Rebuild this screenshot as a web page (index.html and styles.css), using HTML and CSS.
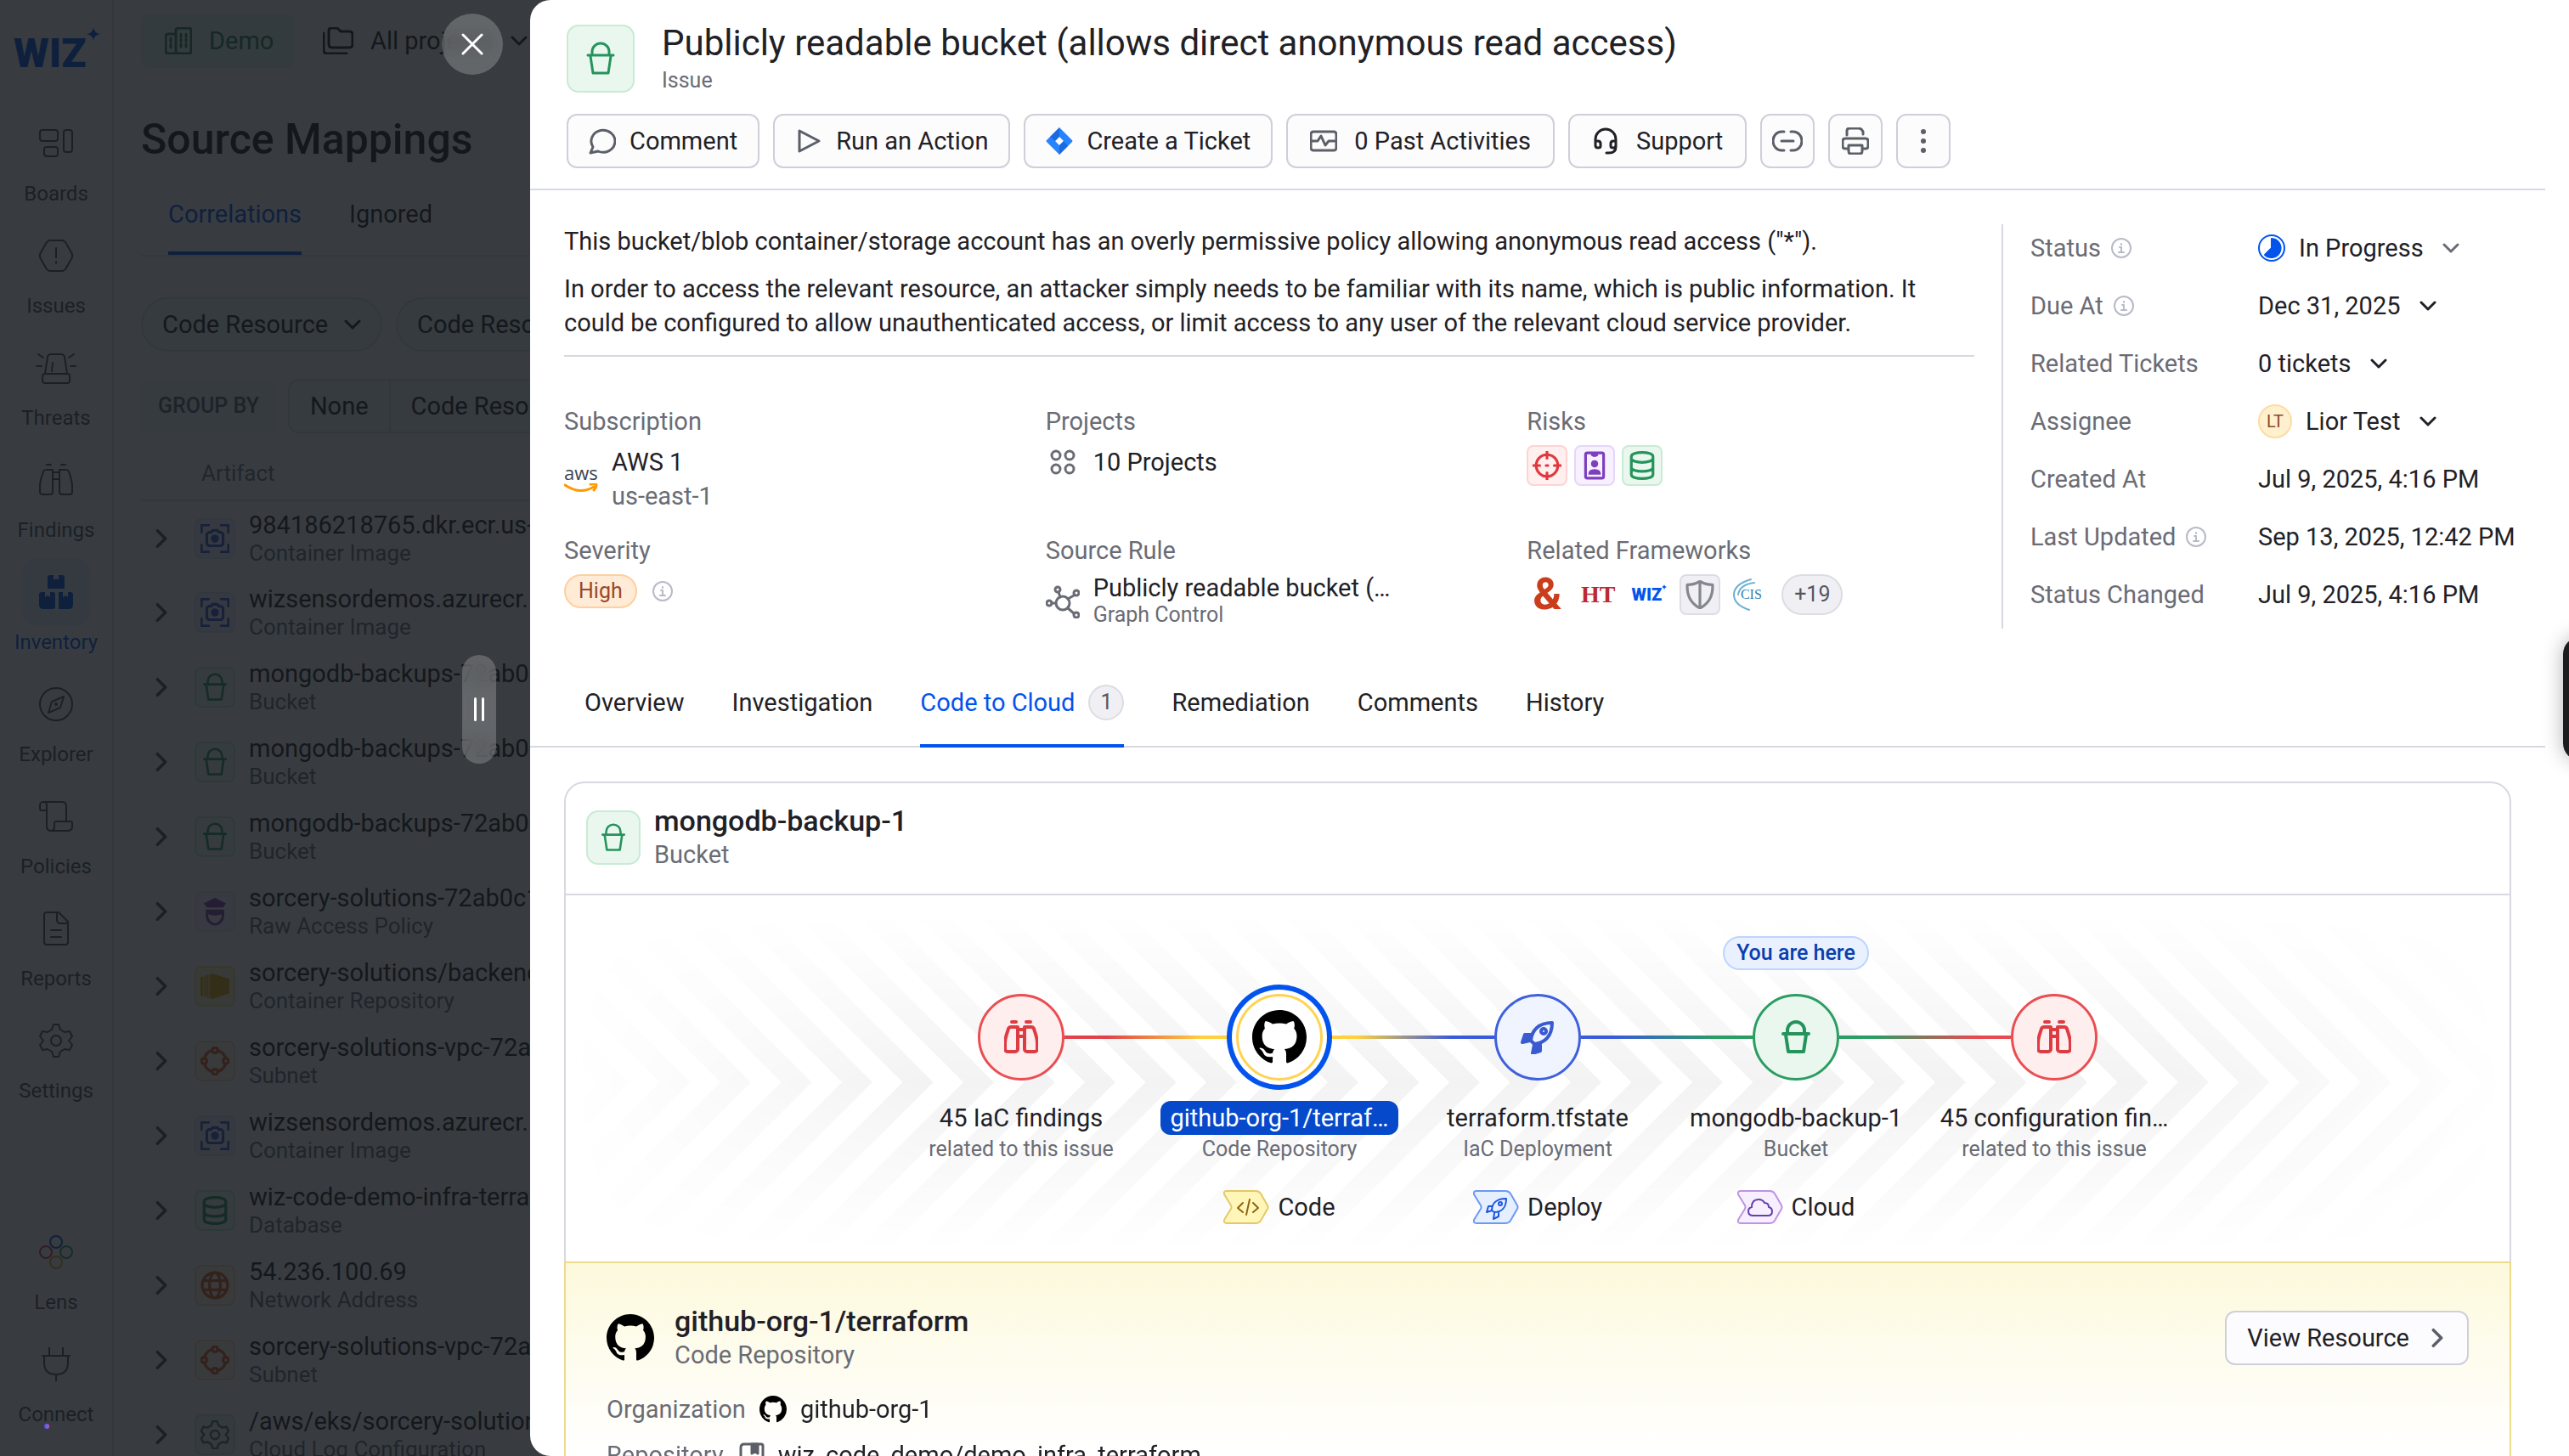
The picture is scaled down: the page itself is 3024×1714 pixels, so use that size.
FILE: index.html
```
<!DOCTYPE html>
<html lang="en">
<head>
  <meta charset="UTF-8">
  <meta name="viewport" content="width=device-width, initial-scale=1.0">
  <title>Wiz - Source Mappings</title>
  <link rel="stylesheet" href="styles.css">
</head>
<body>
  <!-- shared icons -->
  <svg class="sprite" aria-hidden="true">
    <symbol id="i-bucket" viewBox="0 0 32 40"><path d="M6 14v-2a10 10 0 0 1 20 0v2M1 16h30M4 17l3 20h18l3-20"/></symbol>
    <symbol id="i-down" viewBox="0 0 20 12"><path d="M2 2l8 8 8-8"/></symbol>
    <symbol id="i-right" viewBox="0 0 12 20"><path d="M2 2l8 8-8 8"/></symbol>
    <symbol id="i-info" viewBox="0 0 24 24"><circle cx="12" cy="12" r="11"/><path d="M10 11h2v6M9 17h6M12 7v1"/></symbol>
    <symbol id="i-binoculars" viewBox="0 0 40 40"><path d="M9 2h5M26 2h5M8 8h8v26a3 3 0 0 1-3 3H4a3 3 0 0 1-3-3V27c0-7 3-13 4-17q1-2 3-2zM32 8h-8v26a3 3 0 0 0 3 3h9a3 3 0 0 0 3-3V27c0-7-3-13-4-17q-1-2-3-2zM16 11h8M16 19h8"/></symbol>
    <symbol id="i-image" viewBox="0 0 32 32"><path d="M1 9V1h8M23 1h8v8M31 23v8h-8M9 31H1v-8M9 9h3l1-2h6l1 2h3l2 2v11l-2 2H9l-2-2V11z"/><circle cx="16" cy="16" r="3" fill="currentColor"/></symbol>
    <symbol id="i-db" viewBox="0 0 28 32"><path d="M2 6c0-6 24-6 24 0v20c0 6-24 6-24 0zM2 8c0 6 24 6 24 0M2 18c0 6 24 6 24 0"/></symbol>
    <symbol id="i-subnet" viewBox="0 0 32 32"><circle cx="16" cy="16" r="12"/><g fill="#fdeedd"><circle cx="16" cy="4" r="3"/><circle cx="16" cy="28" r="3"/><circle cx="4" cy="16" r="3"/><circle cx="28" cy="16" r="3"/></g></symbol>
    <symbol id="i-globe" viewBox="0 0 32 32"><circle cx="16" cy="16" r="14"/><ellipse cx="16" cy="16" rx="6" ry="14"/><path d="M3 11h26M3 21h26"/></symbol>
    <symbol id="i-gear" viewBox="0 0 40 40"><circle cx="20" cy="20" r="6"/><path d="M17 1h6l2 6 5 3 6-1 3 6-4 5 4 5-3 6-6-1-5 3-2 6h-6l-2-6-5-3-6 1-3-6 4-5-4-5 3-6 6 1 5-3z"/></symbol>
    <symbol id="i-rocket" viewBox="0 0 40 40"><path d="M12 24c1-12 9-21 25-21 0 16-9 24-21 25z"/><circle cx="27" cy="13" r="3"/><path class="fin" d="M12 17H5l-3 9 9-2M23 29v7l-9 3 2-10"/></symbol>
    <symbol id="i-github" viewBox="0 0 16 16"><path d="M8 0C3.58 0 0 3.58 0 8c0 3.54 2.29 6.53 5.47 7.59.4.07.55-.17.55-.38 0-.19-.01-.82-.01-1.49-2.01.37-2.53-.49-2.69-.94-.09-.23-.48-.94-.82-1.13-.28-.15-.68-.52-.01-.53.63-.01 1.08.58 1.23.82.72 1.21 1.87.87 2.33.66.07-.52.28-.87.51-1.07-1.78-.2-3.64-.89-3.64-3.95 0-.87.31-1.59.82-2.15-.08-.2-.36-1.02.08-2.12 0 0 .67-.21 2.2.82.64-.18 1.32-.27 2-.27s1.36.09 2 .27c1.53-1.04 2.2-.82 2.2-.82.44 1.1.16 1.92.08 2.12.51.56.82 1.27.82 2.15 0 3.07-1.87 3.75-3.65 3.95.29.25.54.73.54 1.48 0 1.07-.01 1.93-.01 2.2 0 .21.15.46.55.38A8.01 8.01 0 0 0 16 8c0-4.42-3.58-8-8-8z"/></symbol>
    <symbol id="i-star" viewBox="0 0 16 16"><path d="M8 0q1 7 8 8-7 1-8 8-1-7-8-8 7-1 8-8z"/></symbol>
  </svg>

  <div class="app">
    <aside class="sidebar">
      <a href="#" class="logo">WIZ<svg class="solid"><use href="#i-star"/></svg></a>
      <nav>
        <a href="#"><span class="nav-icon"><svg viewBox="0 0 40 40"><rect x="1" y="4" width="21" height="13" rx="3"/><rect x="6" y="24" width="16" height="11" rx="3"/><rect x="29" y="4" width="10" height="26" rx="3"/></svg></span>Boards</a>
        <a href="#"><span class="nav-icon"><svg viewBox="0 0 40 40"><path d="M12 2h16l3 2 8 14v4l-8 14-3 2H12l-3-2L1 22v-4L9 4zM20 11v11M20 27v2"/></svg></span>Issues</a>
        <a href="#"><span class="nav-icon"><svg class="wide" viewBox="0 0 48 40"><rect x="8" y="27" width="32" height="11" rx="3"/><path d="M11 27l3-20q1-3 4-3h12q3 0 4 3l3 20M20 14l-1 10M1 18h6M41 18h6M3 4l6 4M45 4l-6 4"/></svg></span>Threats</a>
        <a href="#"><span class="nav-icon"><svg><use href="#i-binoculars"/></svg></span>Findings</a>
        <a href="#" class="active"><span class="nav-icon"><svg class="solid" viewBox="0 0 40 40"><path d="M10 3q0-3 3-3h4v6l3-2 3 2V0h4q3 0 3 3v13H10zM0 23q0-3 3-3h4v6l3-2 3 2v-6h3q3 0 3 3v14q0 3-3 3H5q-5 0-5-5zM23 20h5v6l3-2 3 2v-6h3q3 0 3 3v12q0 5-5 5H23z"/></svg></span>Inventory</a>
        <a href="#"><span class="nav-icon"><svg viewBox="0 0 40 40"><circle cx="20" cy="20" r="19"/><path d="M29 11l-4 13-14 6 4-13z"/><circle cx="20" cy="20" r="1"/></svg></span>Explorer</a>
        <a href="#"><span class="nav-icon"><svg viewBox="0 0 40 40"><path d="M5 3h22q5 0 5 5v18M1 7a4 4 0 0 1 8 0v6H3q-2 0-2-2zM9 13v19q0 5 5 5h19q6 0 6-5v-4q0-2-2-2H20q-2 0-2 2v4q0 5-4 5"/></svg></span>Policies</a>
        <a href="#"><span class="nav-icon"><svg viewBox="0 0 40 40"><path d="M9 1h14l11 11v24q0 3-3 3H9q-3 0-3-3V4q0-3 3-3zM21 1v9q0 4 4 4h9M14 22h12M14 30h12"/></svg></span>Reports</a>
        <a href="#"><span class="nav-icon"><svg><use href="#i-gear"/></svg></span>Settings</a>
      </nav>
      <nav class="bottom">
        <a href="#"><span class="nav-icon"><svg viewBox="0 0 40 40"><circle cx="20" cy="8" r="7" stroke="#0254ec"/><circle cx="8" cy="20" r="7" stroke="#d8394a"/><circle cx="32" cy="20" r="7" stroke="#2b9d66"/><circle cx="20" cy="32" r="7" stroke="#d9a51f"/></svg></span>Lens</a>
        <a href="#"><span class="nav-icon"><svg viewBox="0 0 40 40"><path d="M4 10h32M6 10v8q0 14 14 14t14-14v-8M12 10V0M28 10V0M20 32v8"/></svg></span>Connect</a>
      </nav>
    </aside>

    <div class="page">
      <div class="topbar">
        <a href="#" class="tenant"><svg viewBox="0 0 32 32"><path d="M13 31H4q-3 0-3-3V11q0-3 3-3h9M13 31V4q0-3 3-3h12q3 0 3 3v24q0 3-3 3zM7 13v4M7 20v4M19 8v3M25 8v3M19 14v3M25 14v3M19 20v3M25 20v3"/></svg>Demo</a>
        <a href="#" class="projects"><svg class="wide" viewBox="0 0 36 32"><path d="M1 7v20q0 4 4 4h23M10 1h7l4 4h10q4 0 4 4v11q0 4-4 4H11q-4 0-4-4V4q0-3 3-3z"/></svg>All projects<svg class="chev"><use href="#i-down"/></svg></a>
      </div>
      <h1>Source Mappings</h1>
      <div class="page-tabs"><a href="#" class="active">Correlations</a><a href="#">Ignored</a></div>
      <div class="filters">
        <div class="filter"><select aria-label="Code Resource"><option>Code Resource</option></select><svg class="chev"><use href="#i-down"/></svg></div>
        <div class="filter"><select aria-label="Code Resource Type"><option>Code Resource Type</option></select><svg class="chev"><use href="#i-down"/></svg></div>
      </div>
      <div class="group">
        <span class="group-label">GROUP BY</span>
        <div class="segments"><button type="button">None</button><button type="button">Code Resource</button></div>
      </div>
      <table class="artifacts">
        <thead><tr><th></th><th></th><th>Artifact</th></tr></thead>
        <tbody>
          <tr><td><svg class="arrow"><use href="#i-right"/></svg></td><td><span class="box blue"><svg><use href="#i-image"/></svg></span></td><td>984186218765.dkr.ecr.us-east-1<small>Container Image</small></td></tr>
          <tr><td><svg class="arrow"><use href="#i-right"/></svg></td><td><span class="box blue"><svg><use href="#i-image"/></svg></span></td><td>wizsensordemos.azurecr.io<small>Container Image</small></td></tr>
          <tr><td><svg class="arrow"><use href="#i-right"/></svg></td><td><span class="box green"><svg><use href="#i-bucket"/></svg></span></td><td>mongodb-backups-72ab0c<small>Bucket</small></td></tr>
          <tr><td><svg class="arrow"><use href="#i-right"/></svg></td><td><span class="box green"><svg><use href="#i-bucket"/></svg></span></td><td>mongodb-backups-72ab0c<small>Bucket</small></td></tr>
          <tr><td><svg class="arrow"><use href="#i-right"/></svg></td><td><span class="box green"><svg><use href="#i-bucket"/></svg></span></td><td>mongodb-backups-72ab0c<small>Bucket</small></td></tr>
          <tr><td><svg class="arrow"><use href="#i-right"/></svg></td><td><span class="box purple"><svg viewBox="0 0 32 36"><path fill="currentColor" stroke="none" d="M2 8L16 1l14 7-4 5H6z"/><path d="M6 17h20v6c0 7-6 11-10 11S6 30 6 23z"/><path fill="currentColor" stroke="none" d="M6 16h20v5q-10 4-20 0z"/></svg></span></td><td>sorcery-solutions-72ab0c1d<small>Raw Access Policy</small></td></tr>
          <tr><td><svg class="arrow"><use href="#i-right"/></svg></td><td><span class="box yellow"><svg class="solid" viewBox="0 0 32 32"><path d="M0 6l3-1v22l-3-1zM4 5l2-1v24l-2-1zM7 4l2-1v26l-2-1zM10 3l4-1 18 6v16l-18 6-4-1z"/></svg></span></td><td>sorcery-solutions/backend<small>Container Repository</small></td></tr>
          <tr><td><svg class="arrow"><use href="#i-right"/></svg></td><td><span class="box orange"><svg><use href="#i-subnet"/></svg></span></td><td>sorcery-solutions-vpc-72ab<small>Subnet</small></td></tr>
          <tr><td><svg class="arrow"><use href="#i-right"/></svg></td><td><span class="box blue"><svg><use href="#i-image"/></svg></span></td><td>wizsensordemos.azurecr.io<small>Container Image</small></td></tr>
          <tr><td><svg class="arrow"><use href="#i-right"/></svg></td><td><span class="box green"><svg><use href="#i-db"/></svg></span></td><td>wiz-code-demo-infra-terraform<small>Database</small></td></tr>
          <tr><td><svg class="arrow"><use href="#i-right"/></svg></td><td><span class="box orange"><svg><use href="#i-globe"/></svg></span></td><td>54.236.100.69<small>Network Address</small></td></tr>
          <tr><td><svg class="arrow"><use href="#i-right"/></svg></td><td><span class="box orange"><svg><use href="#i-subnet"/></svg></span></td><td>sorcery-solutions-vpc-72ab<small>Subnet</small></td></tr>
          <tr><td><svg class="arrow"><use href="#i-right"/></svg></td><td><span class="box teal"><svg><use href="#i-gear"/></svg></span></td><td>/aws/eks/sorcery-solutions<small>Cloud Log Configuration</small></td></tr>
        </tbody>
      </table>
    </div>
  </div>

  <div class="backdrop"><span class="pulse"></span></div>

  <div class="drawer-wrap">
    <button type="button" class="close" aria-label="Close"><svg viewBox="0 0 26 26"><path d="M2 2l22 22M24 2L2 24"/></svg></button>
    <button type="button" class="resize" aria-label="Resize"><i></i><i></i></button>

    <main class="drawer">
      <header class="drawer-head">
        <div class="heading">
          <span class="box green large"><svg><use href="#i-bucket"/></svg></span>
          <div>
            <h2>Publicly readable bucket (allows direct anonymous read access)</h2>
            <p>Issue</p>
          </div>
        </div>
        <div class="actions">
          <button type="button"><svg viewBox="0 0 32 32"><path d="M2 30l3-7a14 13 0 1 1 6 5z"/></svg>Comment</button>
          <button type="button"><svg viewBox="0 0 32 32"><path d="M5 4v24l23-12z"/></svg>Run an Action</button>
          <button type="button"><svg class="solid" viewBox="0 0 32 32"><path fill="#2684ff" fill-rule="evenodd" d="M16 0l15 15q1 1 0 2L16 32 1 17q-1-1 0-2zM16 11l-5 5 5 5 5-5z"/><path fill="#1259cf" d="M16 0v11l-5 5-6-5zM16 32V21l5-5 5 6z" opacity=".6"/></svg>Create a Ticket</button>
          <button type="button" class="roomy"><svg viewBox="0 0 32 32"><rect x="1" y="5" width="30" height="22" rx="3"/><path d="M2 16h7l4-6 5 11 4-5h7"/></svg>0 Past Activities</button>
          <button type="button" class="roomy dark"><svg viewBox="0 0 32 32"><path d="M4 18v-4a12 12 0 0 1 24 0v9q0 7-8 7h-3M4 16h3q3 0 3 3v3q0 2-3 2t-3-3zM28 16h-3q-3 0-3 3v3q0 2 3 2t3-3z"/></svg>Support</button>
          <button type="button" class="square" aria-label="Copy link"><svg class="wide" viewBox="0 0 36 32"><path d="M14 5h-3a10 11 0 0 0 0 22h3M22 5h3a10 11 0 0 1 0 22h-3M11 16h14"/></svg></button>
          <button type="button" class="square" aria-label="Print"><svg viewBox="0 0 32 32"><path d="M6 9V4q0-3 3-3h11q3 0 5 4v3M7 25H4q-3 0-3-3v-6q0-3 3-3h24q3 0 3 3v6q0 3-3 3h-3M8 21h16v7q0 3-3 3H11q-3 0-3-3z"/></svg></button>
          <button type="button" class="square" aria-label="More"><svg class="solid" viewBox="0 0 32 32"><circle cx="16" cy="5" r="3"/><circle cx="16" cy="16" r="3"/><circle cx="16" cy="27" r="3"/></svg></button>
        </div>
      </header>

      <section class="summary">
        <div class="about">
          <div class="description">
            <p>This bucket/blob container/storage account has an overly permissive policy allowing anonymous read access ("*").</p>
            <p>In order to access the relevant resource, an attacker simply needs to be familiar with its name, which is public information. It could be configured to allow unauthenticated access, or limit access to any user of the relevant cloud service provider.</p>
          </div>
          <div class="facts">
            <div>
              <h3>Subscription</h3>
              <div class="fact"><span class="aws">aws<svg viewBox="0 0 40 12"><path d="M1 2q18 12 34 2"/><path d="M31 1q7-1 7 1 0 3-3 6"/></svg></span><p>AWS 1<span>us-east-1</span></p></div>
            </div>
            <div>
              <h3>Projects</h3>
              <div class="fact"><svg viewBox="0 0 40 40"><circle cx="12" cy="12" r="5"/><circle cx="28" cy="12" r="5"/><circle cx="12" cy="28" r="5"/><circle cx="28" cy="28" r="5"/></svg><p>10 Projects</p></div>
            </div>
            <div>
              <h3>Risks</h3>
              <div class="risks">
                <span class="box red"><svg viewBox="0 0 32 32"><circle cx="16" cy="16" r="12"/><path d="M16 0v8M16 24v8M0 16h8M24 16h8M15 16h2"/></svg></span>
                <span class="box violet"><svg viewBox="0 0 32 32"><rect x="6" y="2" width="20" height="28" rx="2"/><path fill="currentColor" stroke="none" d="M12 2h8v3q-4 3-8 0zM16 10a4 4 0 1 1 0 8 4 4 0 0 1 0-8zM9 26q0-6 7-6t7 6z"/></svg></span>
                <span class="box green"><svg><use href="#i-db"/></svg></span>
              </div>
            </div>
            <div>
              <h3>Severity</h3>
              <div class="severity"><span class="high">High</span><svg class="info"><use href="#i-info"/></svg></div>
            </div>
            <div>
              <h3>Source Rule</h3>
              <div class="fact rule"><svg viewBox="0 0 40 40"><circle cx="20" cy="22" r="8"/><circle cx="14" cy="6" r="3"/><circle cx="36" cy="10" r="3"/><circle cx="36" cy="36" r="3"/><circle cx="4" cy="22" r="3"/><path d="M15 9l2 6M33 13l-7 4M33 34l-7-6M7 22h5"/></svg><p>Publicly readable bucket (…<span>Graph Control</span></p></div>
            </div>
            <div>
              <h3>Related Frameworks</h3>
              <div class="frameworks">
                <span class="amp">&amp;</span>
                <span class="ht">HT</span>
                <span class="mini-wiz">WIZ<svg class="solid"><use href="#i-star"/></svg></span>
                <span class="box grey"><svg viewBox="0 0 32 32"><path d="M16 1q6 4 14 4 1 18-14 26Q1 23 2 5q8 0 14-4zM16 1v30"/></svg></span>
                <span class="cis"><svg viewBox="0 0 40 40"><path d="M24 2Q4 8 4 20t18 18M28 6Q11 8 9 20"/></svg>CIS</span>
                <a href="#" class="more">+19</a>
              </div>
            </div>
          </div>
        </div>

        <div class="meta">
          <label for="status">Status <svg class="info"><use href="#i-info"/></svg></label>
          <div class="picker"><svg class="progress" viewBox="0 0 32 32"><circle cx="16" cy="16" r="15"/><path d="M16 5a11 11 0 1 1-8 19l8-8z"/></svg><select id="status"><option>In Progress</option></select><svg class="chev light"><use href="#i-down"/></svg></div>
          <label for="due">Due At <svg class="info"><use href="#i-info"/></svg></label>
          <div class="picker"><select id="due"><option>Dec 31, 2025</option></select><svg class="chev"><use href="#i-down"/></svg></div>
          <label for="tickets">Related Tickets</label>
          <div class="picker"><select id="tickets"><option>0 tickets</option></select><svg class="chev"><use href="#i-down"/></svg></div>
          <label for="assignee">Assignee</label>
          <div class="picker"><span class="avatar">LT</span><select id="assignee"><option>Lior Test</option></select><svg class="chev"><use href="#i-down"/></svg></div>
          <span>Created At</span><time>Jul 9, 2025, 4:16 PM</time>
          <span>Last Updated <svg class="info"><use href="#i-info"/></svg></span><time>Sep 13, 2025, 12:42 PM</time>
          <span>Status Changed</span><time>Jul 9, 2025, 4:16 PM</time>
        </div>
      </section>

      <nav class="tabs">
        <a href="#">Overview</a>
        <a href="#">Investigation</a>
        <a href="#" class="active">Code to Cloud <span>1</span></a>
        <a href="#">Remediation</a>
        <a href="#">Comments</a>
        <a href="#">History</a>
      </nav>

      <section class="card">
        <div class="card-head">
          <span class="box green medium"><svg><use href="#i-bucket"/></svg></span>
          <p><b>mongodb-backup-1</b>Bucket</p>
        </div>

        <div class="flow">
          <svg class="stripes" aria-hidden="true">
            <defs>
              <pattern id="up" width="71.5" height="10" patternUnits="userSpaceOnUse" patternTransform="translate(39 200) skewX(45)"><rect width="36" height="10"/></pattern>
              <pattern id="dn" width="71.5" height="10" patternUnits="userSpaceOnUse" patternTransform="translate(39 200) skewX(-45)"><rect width="36" height="10"/></pattern>
            </defs>
            <rect width="100%" height="200" fill="url(#up)"/>
            <rect y="200" width="100%" height="200" fill="url(#dn)"/>
          </svg>
          <ol class="nodes">
            <li>
              <div class="here"></div>
              <div class="track"><i></i><span class="node n-red"><svg><use href="#i-binoculars"/></svg></span><i class="out red-yellow"></i></div>
              <strong>45 IaC findings</strong>
              <small>related to this issue</small>
            </li>
            <li>
              <div class="here"></div>
              <div class="track"><i class="in red-yellow"></i><span class="node n-code"><svg class="solid"><use href="#i-github"/></svg></span><i class="out yellow-blue"></i></div>
              <strong class="selected">github-org-1/terraf…</strong>
              <small>Code Repository</small>
              <div class="stage s-code"><svg viewBox="0 0 54 40"><path d="M4 1h34q4 0 6 3l8 14q1 2 0 4l-8 14q-2 3-6 3H4q-4 0-3-4l8-13q1-2 0-4L1 5q-1-4 3-4z"/><path d="M23 15l-6 6 6 5M35 15l6 6-6 5M31 11l-4 18"/></svg>Code</div>
            </li>
            <li>
              <div class="here"></div>
              <div class="track"><i class="in yellow-blue"></i><span class="node n-blue"><svg class="rocket"><use href="#i-rocket"/></svg></span><i class="out blue-green"></i></div>
              <strong>terraform.tfstate</strong>
              <small>IaC Deployment</small>
              <div class="stage s-deploy"><svg viewBox="0 0 54 40"><path d="M4 1h34q4 0 6 3l8 14q1 2 0 4l-8 14q-2 3-6 3H4q-4 0-3-4l8-13q1-2 0-4L1 5q-1-4 3-4z"/><path d="M22 24c0-8 5-14 17-14 0 11-6 16-14 16zM22 19h-4l-2 7 6-2M30 27v4l-6 3 1-7"/><circle cx="32" cy="16" r="2"/></svg>Deploy</div>
            </li>
            <li>
              <div class="here"><span>You are here</span></div>
              <div class="track"><i class="in blue-green"></i><span class="node n-green"><svg><use href="#i-bucket"/></svg></span><i class="out green-red"></i></div>
              <strong>mongodb-backup-1</strong>
              <small>Bucket</small>
              <div class="stage s-cloud"><svg viewBox="0 0 54 40"><path d="M4 1h34q4 0 6 3l8 14q1 2 0 4l-8 14q-2 3-6 3H4q-4 0-3-4l8-13q1-2 0-4L1 5q-1-4 3-4z"/><path d="M19 30q-6 0-6-5 0-4 4-5 0-9 8-9 5 0 7 4 5 0 5 5 4 1 4 5 0 5-5 5z"/></svg>Cloud</div>
            </li>
            <li>
              <div class="here"></div>
              <div class="track"><i class="in green-red"></i><span class="node n-red"><svg><use href="#i-binoculars"/></svg></span><i></i></div>
              <strong>45 configuration fin…</strong>
              <small>related to this issue</small>
            </li>
          </ol>
        </div>

        <div class="resource">
          <div class="resource-head">
            <svg class="solid octo"><use href="#i-github"/></svg>
            <p><b>github-org-1/terraform</b>Code Repository</p>
            <button type="button">View Resource<svg class="arrow"><use href="#i-right"/></svg></button>
          </div>
          <div class="line"><span>Organization</span><svg class="solid"><use href="#i-github"/></svg>github-org-1</div>
          <div class="line"><span>Repository</span><svg class="repo" viewBox="0 0 32 32"><path d="M8 3h20q2 0 2 2v22q0 2-2 2H8q-4 0-4-4V7q0-4 4-4zM4 25q0-3 4-3h22"/><path fill="currentColor" d="M17 3h7v11l-3-2-4 2z"/></svg>wiz_code_demo/demo_infra_terraform</div>
        </div>
      </section>
    </main>
  </div>

  <button type="button" class="side-widget" aria-label="Help"></button>
</body>
</html>
```
FILE: styles.css
```
* {
  box-sizing: border-box;
}
body {
  margin: 0;
  height: 100vh;
  overflow: hidden;
  font-family: Roboto, "Liberation Sans", sans-serif;
  font-size: 29px;
  line-height: 40px;
  color: #1f2126;
}
h1, h2, h3, p, ol {
  margin: 0;
  padding: 0;
  font-weight: 400;
}
a {
  color: inherit;
  text-decoration: none;
}
button, select {
  font: inherit;
  color: inherit;
}
select {
  appearance: none;
  border: 0;
  padding: 0;
  background: none;
}
svg {
  width: 32px;
  height: 32px;
  flex: none;
  fill: none;
  stroke: currentColor;
  stroke-width: 3;
  stroke-linejoin: round;
  stroke-linecap: round;
}
.solid {
  fill: currentColor;
  stroke: none;
}
.sprite {
  display: none;
}
.chev {
  width: 20px;
  height: 12px;
}
.arrow {
  width: 14px;
  height: 24px;
}
.info {
  width: 24px;
  height: 24px;
  color: #b9bac8;
  stroke-width: 2;
}

/* coloured icon boxes */
.box {
  display: flex;
  align-items: center;
  justify-content: center;
  width: 48px;
  height: 48px;
  border: 2px solid;
  border-radius: 8px;
  flex: none;
}
.box svg {
  width: 34px;
  height: 34px;
}
.box.medium {
  width: 64px;
  height: 64px;
  border-radius: 14px;
}
.box.large {
  width: 80px;
  height: 80px;
  border-radius: 14px;
}
.box.large svg {
  height: 40px;
}
.green { color: #25935c; background: #e9f7ee; border-color: #c8ebd4; }
.blue { color: #3a5bd9; background: #eef2ff; border-color: #dfe6ff; }
.red { color: #e0383e; background: #ffefef; border-color: #ffd3d3; }
.violet { color: #7d3fbd; background: #f7f0ff; border-color: #e6d6fa; }
.purple { color: #8a3fb5; background: #f5effc; border-color: #f0e6fa; }
.orange { color: #dd5a20; background: #fdeedd; border-color: #fbd9b0; }
.yellow { color: #d9a90c; background: #fbf3c5; border-color: #f3e28a; }
.teal { color: #5f6d70; background: #e6f2f1; border-color: #cfe3e2; }
.grey { color: #85868f; background: #f0f0f4; border-color: #dcdce4; }

/* page behind the drawer */
.app {
  display: flex;
  height: 100vh;
  background: #fff;
}
.sidebar {
  display: flex;
  flex-direction: column;
  width: 134px;
  flex: none;
  padding: 32px 0 16px;
  border-right: 2px solid #dde2e6;
  font-size: 24px;
  color: #4f5560;
}
.logo {
  display: flex;
  align-items: flex-start;
  height: 56px;
  padding-left: 16px;
  margin-bottom: 41px;
  font-size: 48px;
  line-height: 62px;
  font-weight: 900;
  color: #0254ec;
}
.logo svg {
  width: 16px;
  height: 16px;
}
.sidebar nav a {
  display: flex;
  flex-direction: column;
  align-items: center;
  height: 132px;
  line-height: 38px;
}
.bottom {
  margin-top: auto;
}
.nav-icon {
  display: flex;
  align-items: center;
  justify-content: center;
  width: 80px;
  height: 80px;
  border-radius: 16px;
}
.nav-icon svg {
  width: 40px;
  height: 40px;
  stroke-width: 2;
}
.nav-icon .wide {
  width: 48px;
}
.sidebar .active {
  color: #0254ec;
}
.sidebar .active .nav-icon {
  background: #e6eeff;
}
.page {
  flex: 1;
  padding: 16px 0 0 32px;
  white-space: nowrap;
}
.topbar {
  display: flex;
  align-items: center;
  gap: 34px;
  height: 64px;
}
.tenant, .projects {
  display: flex;
  align-items: center;
  gap: 20px;
}
.tenant {
  width: 180px;
  height: 64px;
  padding-left: 28px;
  border-radius: 8px;
  background: #e6f5f0;
  color: #25805c;
}
.page h1 {
  margin-top: 52px;
  font-size: 50px;
  line-height: 64px;
  font-weight: 500;
}
.page-tabs {
  display: flex;
  gap: 56px;
  margin-top: 34px;
  padding-left: 32px;
  border-bottom: 2px solid #dde2e6;
}
.page-tabs a {
  height: 70px;
  line-height: 44px;
}
.page-tabs .active {
  color: #0254ec;
  border-bottom: 4px solid;
}
.filters {
  display: flex;
  gap: 16px;
  margin-top: 48px;
}
.filter {
  display: flex;
  align-items: center;
  gap: 18px;
  height: 64px;
  padding: 0 23px;
  border: 2px solid #d5e2e2;
  border-radius: 32px;
  background: #edf5f5;
}
.group {
  display: flex;
  gap: 14px;
  margin-top: 32px;
}
.group-label {
  height: 64px;
  padding: 0 20px;
  border-radius: 8px;
  background: #edf5f5;
  font-size: 25px;
  line-height: 64px;
  font-weight: 500;
  color: #5f6570;
}
.segments {
  display: flex;
  border: 2px solid #d5e2e2;
  border-radius: 12px;
  background: #edf5f5;
}
.segments button {
  padding: 0 24px;
  border: 0;
  border-right: 2px solid #d5e2e2;
  background: none;
}
.artifacts {
  width: 100%;
  margin-top: 15px;
  border-collapse: collapse;
}
.artifacts th {
  height: 64px;
  padding: 0;
  border-bottom: 2px solid #dde2e6;
  font-size: 26px;
  font-weight: 400;
  text-align: left;
  color: #70757f;
}
.artifacts th:last-child {
  text-indent: -56px;
}
.artifacts td {
  height: 88px;
  padding: 0;
  line-height: 34px;
}
.artifacts td:nth-child(1) {
  width: 63px;
  padding-left: 17px;
}
.artifacts td:nth-child(2) {
  width: 64px;
}
.artifacts .arrow {
  display: block;
  color: #4f5560;
}
.artifacts small {
  display: block;
  font-size: 26px;
  line-height: 32px;
  color: #6b707b;
}
.backdrop {
  position: fixed;
  inset: 0;
  background: rgba(18, 23, 27, 0.84);
}
.pulse {
  position: absolute;
  left: 52px;
  bottom: 32px;
  width: 6px;
  height: 6px;
  border-radius: 3px;
  background: linear-gradient(to right, #3a5bf0, #c158c8);
}

/* drawer */
.drawer-wrap {
  position: fixed;
  inset: 0 0 0 624px;
}
.drawer {
  height: 100%;
  overflow: hidden;
  padding-right: 28px;
  border-radius: 24px 0 0 24px;
  background: #fff;
}
.close, .resize {
  position: absolute;
  display: flex;
  align-items: center;
  justify-content: center;
  padding: 0;
  border: 0;
  color: #fff;
  background: rgba(255, 255, 255, 0.22);
  backdrop-filter: blur(10px);
}
.close {
  top: 16px;
  right: calc(100% + 32px);
  width: 72px;
  height: 72px;
  border-radius: 36px;
}
.close svg {
  width: 26px;
  height: 26px;
}
.resize {
  top: 45%;
  right: calc(100% + 40px);
  gap: 6px;
  width: 40px;
  height: 128px;
  border-radius: 20px;
}
.resize i {
  width: 3px;
  height: 28px;
  border-radius: 2px;
  background: #fff;
}
.drawer-head {
  padding: 27px 40px 24px;
  border-bottom: 2px solid #d8d9e0;
}
.heading {
  display: flex;
  align-items: center;
  gap: 32px;
  padding-left: 3px;
}
.heading h2 {
  font-size: 42px;
  line-height: 48px;
}
.heading p {
  margin-top: 4px;
  font-size: 25px;
  line-height: 32px;
  color: #6a6c75;
}
.actions {
  display: flex;
  gap: 16px;
  margin-top: 23px;
  padding-left: 3px;
}
.actions button, .resource button {
  display: flex;
  align-items: center;
  justify-content: center;
  gap: 16px;
  height: 64px;
  padding: 0 24px;
  border: 2px solid #cfcfdb;
  border-radius: 12px;
  background: #fcfcfd;
}
.actions .roomy {
  gap: 20px;
  padding: 0 26px;
}
.actions svg {
  color: #5c5f68;
}
.actions .dark svg {
  color: #1f2126;
}
.actions .square {
  width: 64px;
  padding: 0;
}
.wide {
  width: 36px;
}

.summary {
  display: flex;
  padding: 40px 40px 0;
}
.about {
  flex: 1;
  margin-right: 32px;
}
.description {
  padding-bottom: 18px;
  border-bottom: 2px solid #d8d9e0;
}
.description p + p {
  margin-top: 16px;
}
.facts {
  display: grid;
  grid-template-columns: 1fr 1fr 1fr;
  gap: 24px 40px;
  margin-top: 56px;
}
h3 {
  margin-bottom: 8px;
  font-size: 29px;
  color: #6a6c75;
}
.fact {
  display: flex;
  gap: 16px;
}
.fact > svg {
  width: 40px;
  height: 40px;
  color: #6a6c75;
}
.fact p span {
  display: block;
  color: #6a6c75;
}
.rule {
  align-items: center;
}
.rule p {
  line-height: 32px;
}
.rule span {
  font-size: 25px;
}
.aws {
  align-self: center;
  width: 40px;
  font: 400 22px/16px "Open Sans", sans-serif;
  color: #3c4452;
}
.aws svg {
  display: block;
  width: 40px;
  height: 12px;
  margin-top: 5px;
  color: #f90;
}
.risks {
  display: flex;
  gap: 8px;
}
.severity {
  display: flex;
  align-items: center;
  gap: 18px;
}
.high {
  padding: 0 15px;
  border: 2px solid #fdd0a0;
  border-radius: 20px;
  background: #ffebd6;
  font-size: 25px;
  line-height: 36px;
  color: #99472b;
}
.frameworks {
  display: flex;
  align-items: center;
  gap: 12px;
}
.amp, .ht, .mini-wiz, .cis {
  display: flex;
  align-items: center;
  justify-content: center;
  width: 48px;
  height: 48px;
}
.amp {
  font-size: 52px;
  font-weight: 700;
  color: #cb3e1c;
}
.ht {
  font: 700 28px/48px "Liberation Serif", serif;
  color: #bb2a2e;
}
.mini-wiz {
  font-size: 20px;
  font-weight: 900;
  color: #0254ec;
}
.mini-wiz svg {
  align-self: flex-start;
  width: 6px;
  height: 6px;
  margin-top: 12px;
}
.cis {
  position: relative;
  font: 400 16px/48px "Liberation Serif", serif;
  color: #2f7fae;
}
.cis svg {
  position: absolute;
  left: 0;
  width: 40px;
  height: 40px;
  stroke-width: 2;
  color: #6bb0d3;
}
.more {
  width: 72px;
  border: 2px solid #dcdce4;
  border-radius: 24px;
  background: #f0f0f4;
  font-size: 25px;
  line-height: 44px;
  text-align: center;
  color: #55575f;
}

.meta {
  display: grid;
  grid-template-columns: 268px 1fr;
  row-gap: 28px;
  width: 600px;
  flex: none;
  padding: 8px 0 20px 32px;
  border-left: 2px solid #d8d9e0;
  white-space: nowrap;
}
.meta > label, .meta > span {
  display: flex;
  align-items: center;
  gap: 12px;
  color: #6a6c75;
}
.picker {
  display: flex;
  align-items: center;
  gap: 16px;
}
.picker .chev {
  margin-left: 6px;
}
.picker .light {
  color: #6a6c75;
}
.progress {
  stroke: #0254ec;
  stroke-width: 2;
}
.progress path {
  fill: #0254ec;
}
.avatar {
  width: 40px;
  height: 40px;
  border: 2px solid #fddca0;
  border-radius: 20px;
  background: #fff0cf;
  font-size: 20px;
  line-height: 36px;
  text-align: center;
  color: #8a4b2a;
}

.tabs {
  display: flex;
  gap: 56px;
  height: 102px;
  margin-top: 38px;
  padding-left: 64px;
  border-bottom: 2px solid #d8d9e0;
}
.tabs a {
  display: flex;
  align-items: center;
  gap: 16px;
  height: 102px;
  border-bottom: 4px solid transparent;
}
.tabs .active {
  color: #0254ec;
  border-color: #0254ec;
}
.tabs span {
  width: 42px;
  height: 42px;
  border: 2px solid #dcdce4;
  border-radius: 21px;
  background: #f0f0f4;
  font-size: 25px;
  line-height: 38px;
  text-align: center;
  color: #55575f;
}

.card {
  margin: 40px 40px 0;
}
.card-head {
  display: flex;
  align-items: center;
  gap: 16px;
  height: 134px;
  padding: 0 0 2px 24px;
  border: 2px solid #d8d9e0;
  border-radius: 24px 24px 0 0;
}
.card b, .resource b {
  display: block;
  font-size: 34px;
  font-weight: 500;
  color: #1f2126;
}
.card p {
  color: #6a6c75;
}
.flow {
  position: relative;
  padding: 48px 0 44px;
  border: solid #d8d9e0;
  border-width: 0 2px;
}
.stripes {
  position: absolute;
  top: 20px;
  left: 0;
  width: 100%;
  height: 400px;
  stroke: none;
  mask-image: linear-gradient(to right, transparent, #000 18%, #000 82%, transparent), linear-gradient(transparent, #000 50%, transparent);
  mask-composite: intersect;
}
.stripes pattern {
  fill: #f3f3f4;
}
.nodes {
  position: relative;
  display: flex;
  justify-content: center;
  list-style: none;
}
.nodes li {
  display: flex;
  flex-direction: column;
  align-items: center;
  width: 304px;
}
.here {
  height: 40px;
  margin-bottom: 28px;
}
.here span {
  display: block;
  padding: 0 14px;
  border: 2px solid #bfd4ff;
  border-radius: 20px;
  background: #e9f1ff;
  font-size: 25px;
  font-weight: 500;
  line-height: 36px;
  color: #0b3fae;
}
.track {
  display: flex;
  align-items: center;
  width: 100%;
}
.track i {
  flex: 1;
  height: 4px;
  background-size: 200% 100%;
}
.out {
  background-position: left;
}
.in {
  background-position: right;
}
.red-yellow { background-image: linear-gradient(to right, #e0444b 25%, #ffd040 80%); }
.yellow-blue { background-image: linear-gradient(to right, #ffd040 20%, #3a5bd9 75%); }
.blue-green { background-image: linear-gradient(to right, #3a5bd9 20%, #2b9d62 80%); }
.green-red { background-image: linear-gradient(to right, #2b9d62 20%, #e84a50 80%); }
.node {
  display: flex;
  align-items: center;
  justify-content: center;
  width: 102px;
  height: 102px;
  border: 3px solid;
  border-radius: 51px;
}
.node svg {
  width: 40px;
  height: 40px;
  stroke-width: 4;
}
.n-red { color: #dd3c43; background: #ffeeee; border-color: #ea4d52; }
.n-blue { color: #3a5bd0; background: #eff4ff; border-color: #3f60dd; }
.n-green { color: #25935c; background: #e9f7ee; border-color: #2b9d62; }
.n-code {
  z-index: 1;
  color: #000;
  background: #fff;
  border-color: #ffd352;
  box-shadow: 0 0 0 5px #fff, 0 0 0 11px #0254ec;
}
.n-code svg {
  width: 64px;
  height: 64px;
}
.fin {
  fill: currentColor;
}
.nodes strong {
  height: 40px;
  margin-top: 24px;
  padding: 0 12px;
  font-weight: 400;
}
.nodes .selected {
  border-radius: 12px;
  background: #064acb;
  color: #fff;
}
.nodes small {
  font-size: 25px;
  line-height: 34px;
  color: #6a6c75;
}
.stage {
  display: flex;
  gap: 10px;
  margin-top: 31px;
}
.stage svg {
  width: 54px;
  height: 40px;
  stroke-width: 2;
}
.s-code svg { fill: #fff6b8; stroke: #e5c867; }
.s-code path + path { fill: none; stroke: #8f6412; }
.s-deploy svg { fill: #e6efff; stroke: #6c99f5; }
.s-deploy path + path, .s-deploy circle { stroke: #1a56e0; }
.s-cloud svg { fill: #f7efff; stroke: #bd93e3; }
.s-cloud path + path { stroke: #6540a8; }

.resource {
  height: 600px;
  padding: 48px 48px 0;
  border: 2px solid #eddb8c;
  background: linear-gradient(#fdf9dc, #fff 220px);
}
.resource-head {
  display: flex;
  align-items: center;
  gap: 24px;
  margin-bottom: 24px;
}
.octo {
  width: 56px;
  height: 56px;
  color: #000;
}
.resource-head p {
  flex: 1;
}
.resource button {
  gap: 26px;
  background: #fcfcfe;
}
.resource button svg {
  margin-right: 4px;
  color: #5c5f68;
}
.line {
  display: flex;
  align-items: center;
  gap: 16px;
  margin-bottom: 14px;
}
.line span {
  color: #6a6c75;
}
.line .solid {
  color: #000;
}
.repo {
  color: #5c5f68;
}
.side-widget {
  position: fixed;
  right: -40px;
  top: 750px;
  width: 47px;
  height: 145px;
  padding: 0;
  border: 0;
  border-radius: 20px;
  background: #1c1c1e;
  box-shadow: 0 0 24px rgba(0, 0, 0, 0.3);
}
```
